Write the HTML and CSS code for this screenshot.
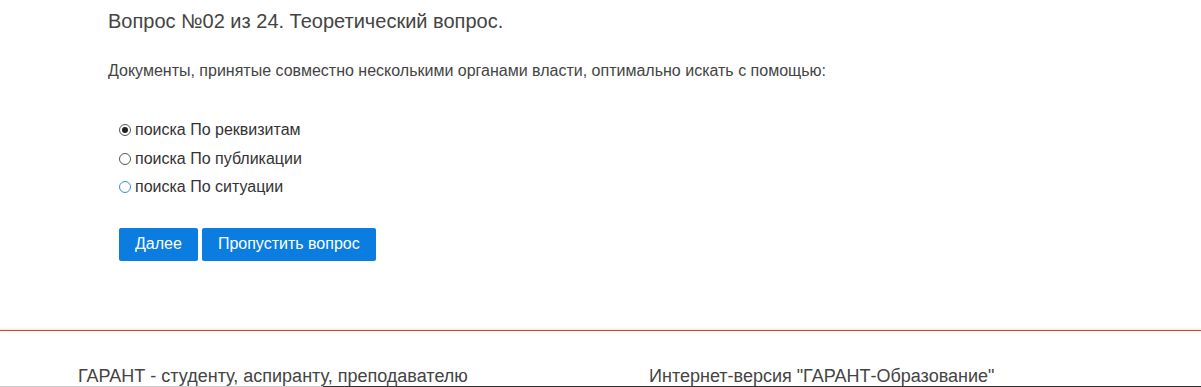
FILE: index.html
```html
<!DOCTYPE html>
<html lang="ru">
<head>
    <meta charset="UTF-8">
    <title>Тестирование - ГАРАНТ</title>
    <link rel="stylesheet" href="styles.css">
</head>
<body>
    <div class="test-container">
        <h2 class="question-title">Вопрос №02 из 24. Теоретический вопрос.</h2>
        <p class="question-text">Документы, принятые совместно несколькими органами власти, оптимально искать с помощью:</p>

        <form class="answers">
            <label class="answer">
                <input type="radio" name="answer" checked>
                <span>поиска По реквизитам</span>
            </label>
            <label class="answer">
                <input type="radio" name="answer">
                <span>поиска По публикации</span>
            </label>
            <label class="answer">
                <input type="radio" name="answer" class="focused">
                <span>поиска По ситуации</span>
            </label>

            <div class="buttons">
                <button type="button" class="btn">Далее</button>
                <button type="button" class="btn">Пропустить вопрос</button>
            </div>
        </form>
    </div>

    <footer>
        <div class="footer-col first">ГАРАНТ - студенту, аспиранту, преподавателю</div>
        <div class="footer-col">Интернет-версия "ГАРАНТ-Образование"</div>
    </footer>
    <div class="bottom-edge"><span class="light"></span><span class="dark"></span></div>
</body>
</html>
```

FILE: styles.css
```css
* {
    margin: 0;
    padding: 0;
    box-sizing: border-box;
}

body {
    font-family: 'Liberation Sans', Arial, sans-serif;
    color: #444;
    background-color: #fff;
    height: 387px;
    overflow: hidden;
    position: relative;
}

.test-container {
    padding: 9px 0 0 108px;
    height: 330px;
}

.question-title {
    font-size: 20px;
    font-weight: normal;
    line-height: 24px;
    color: #444;
}

.question-text {
    font-size: 16px;
    line-height: 20px;
    margin-top: 28px;
    color: #444;
}

.answers {
    margin-top: 35px;
    padding-left: 11px;
}

.answer {
    display: flex;
    align-items: center;
    height: 28.5px;
    font-size: 16px;
    color: #333;
}

.answer input {
    appearance: none;
    width: 12px;
    height: 12px;
    border: 1px solid #555;
    border-radius: 50%;
    margin-right: 4px;
    position: relative;
}

.answer input:checked::after {
    content: "";
    position: absolute;
    left: 2px;
    top: 2px;
    width: 6px;
    height: 6px;
    border-radius: 50%;
    background-color: #222;
}

.answer input.focused {
    border-color: #3b8fd1;
}

.buttons {
    display: flex;
    gap: 4px;
    margin-top: 26px;
}

.btn {
    background-color: #0b7ce0;
    color: #fff;
    border: none;
    border-radius: 2px;
    font-family: 'Liberation Sans', Arial, sans-serif;
    font-size: 16px;
    height: 33px;
    padding: 0 16px;
    cursor: pointer;
}

footer {
    border-top: 1px solid #c9483a;
    box-shadow: 0 -1px 2px rgba(220, 120, 100, 0.25);
    display: flex;
    padding: 34px 0 0 78px;
}

.footer-col {
    font-size: 18px;
    line-height: 22px;
    color: #444;
}

.footer-col.first {
    width: 571px;
}

.bottom-edge {
    position: absolute;
    left: 0;
    bottom: 0;
    width: 100%;
    height: 1px;
    display: flex;
}

.bottom-edge .light {
    width: 323px;
    background-color: #ccc;
}

.bottom-edge .dark {
    flex: 1;
    background-color: #333;
}
```
